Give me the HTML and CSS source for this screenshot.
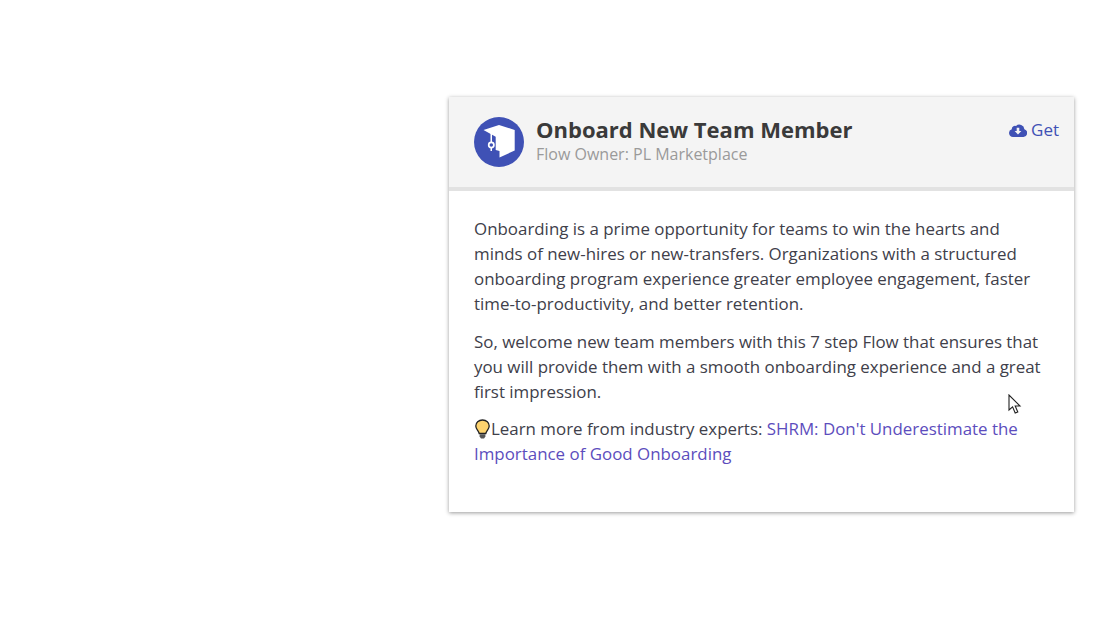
FILE: index.html
```html
<!DOCTYPE html>
<html lang="en">
<head>
    <meta charset="UTF-8">
    <title>Onboard New Team Member</title>
    <link rel="stylesheet" href="styles.css">
</head>
<body>

<div class="card">
    <div class="card-header">
        <svg class="logo" width="50" height="50" viewBox="0 0 50 50">
            <circle cx="25" cy="25" r="25" fill="#3f51b5"/>
            <path d="M9.5 13 L25 8 L40.7 13 V33.5 L25.5 40.5 V34 L21.7 33 V19.7 Z" fill="#fff"/>
            <path d="M16.5 15.5 H18 V34 H16.5 Z" fill="#fff"/>
            <circle cx="17.3" cy="28" r="2.6" fill="#3f51b5" stroke="#fff" stroke-width="1.7"/>
        </svg>
        <div class="title-block">
            <h2>Onboard New Team Member</h2>
            <p>Flow Owner: PL Marketplace</p>
        </div>
        <a class="get-link" href="#">
            <svg width="18" height="14" viewBox="0 0 18 14">
                <path d="M4 14 A4 4 0 0 1 2.8 6.2 A3.2 3.2 0 0 1 7 3 A5 5 0 0 1 15.4 6.2 A4 4 0 0 1 14 14 Z" fill="#3f51b5"/>
                <path d="M7.7 4.8 H10.3 V8 H12.4 L9 11.6 L5.6 8 H7.7 Z" fill="#f4f4f4"/>
            </svg>
            Get
        </a>
    </div>
    <div class="card-body">
        <p>Onboarding is a prime opportunity for teams to win the hearts and minds of new-hires or new-transfers. Organizations with a structured onboarding program experience greater employee engagement, faster time-to-productivity, and better retention.</p>
        <p>So, welcome new team members with this 7 step Flow that ensures that you will provide them with a smooth onboarding experience and a great first impression.</p>
        <p class="tip"><svg class="bulb" width="17" height="20" viewBox="0 0 17 20">
            <path d="M8.5 1 C4.5 1 1.8 3.8 1.8 7 C1.8 10 4.6 11.5 5.2 14.5 H11.8 C12.4 11.5 15.2 10 15.2 7 C15.2 3.8 12.5 1 8.5 1 Z" fill="#fdd36e" stroke="#222" stroke-width="1.3"/>
            <path d="M5.6 15.2 H11.4 V17.4 L10 19.4 H7 L5.6 17.4 Z" fill="#555"/>
        </svg><span class="tip-text">Learn more from industry experts: <a href="#">SHRM: Don't Underestimate the Importance of Good Onboarding</a></span></p>
    </div>
</div>

<svg class="cursor" width="14" height="21" viewBox="0 0 14 21">
    <path d="M1 1 L1 16 L4.6 12.8 L7.2 19 L9.8 18 L7.2 12 L12 12 Z" fill="#fff" stroke="#222" stroke-width="1.1"/>
</svg>

</body>
</html>
```

FILE: styles.css
```css
body {
    margin: 0;
    height: 640px;
    overflow: hidden;
    background-color: #fff;
    font-family: "Open Sans", sans-serif;
    color: #40404a;
}
.card {
    width: 625px;
    height: 415px;
    margin: 97px 0 0 449px;
    background-color: #fff;
    box-shadow: 0 1px 4px rgba(0, 0, 0, 0.4);
}
.card-header {
    display: flex;
    height: 90px;
    padding-left: 25px;
    background-color: #f4f4f4;
    border-bottom: 4px solid #e2e2e2;
}
.logo {
    margin-top: 20px;
    flex-shrink: 0;
}
.title-block {
    flex: 1;
    margin: 17px 0 0 12px;
}
.title-block h2 {
    margin: 0;
    font-size: 22px;
    line-height: 30px;
    font-weight: 700;
    color: #3a3a3a;
}
.title-block p {
    margin: 0;
    font-size: 16px;
    line-height: 20px;
    color: #9a9a9a;
}
.get-link {
    margin: 21px 15px 0 0;
    height: 24px;
    font-size: 17px;
    line-height: 24px;
    color: #3f51b5;
    text-decoration: none;
}
.get-link svg {
    vertical-align: -1px;
}
.card-body {
    padding: 25px 25px 0;
    font-size: 16.9px;
    line-height: 25px;
}
.card-body p {
    margin: 0 0 12.5px;
}
.card-body a {
    color: #5c4dbd;
    text-decoration: none;
}
.bulb {
    vertical-align: -4px;
}
.cursor {
    position: absolute;
    left: 1008px;
    top: 394px;
}
```
